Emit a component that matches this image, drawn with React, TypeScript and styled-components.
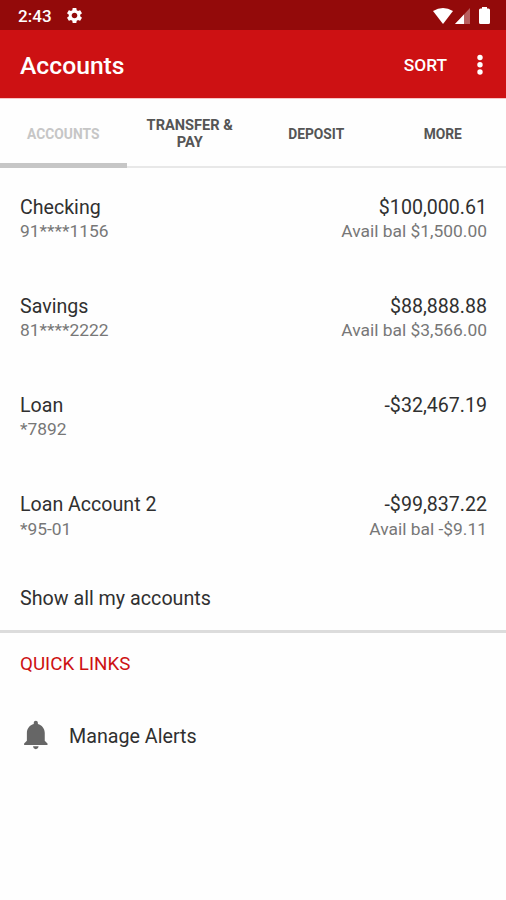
import React from 'react';
import styled, { createGlobalStyle } from 'styled-components';

const GlobalStyle = createGlobalStyle`
  *, *::before, *::after { box-sizing: border-box; }
  body { margin: 0; background: #fff; font-family: Roboto, "Liberation Sans", sans-serif; }
  button { border: 0; padding: 0; background: none; font: inherit; }
`;

const Screen = styled.main`
  display: flex;
  flex-direction: column;
  width: 506px;
  height: 900px;
  overflow: hidden;
  background: #fefefe;
  color: #303030;
`;

const StatusBar = styled.div`
  display: flex;
  align-items: center;
  justify-content: space-between;
  height: 30px;
  padding: 1px 16px 0 18px;
  background: #930a0a;
  color: #fff;
`;

const StatusGroup = styled.div`
  display: flex;
  align-items: center;
`;

const Clock = styled.time`
  width: 47px;
  font-size: 17px;
  font-weight: 500;
  letter-spacing: 0.1px;
`;

const Glyph = styled.svg<{ $gap?: number }>`
  display: block;
  flex: none;
  margin-left: ${({ $gap = 0 }) => $gap}px;
  fill: currentColor;
`;

const AppBar = styled.header`
  display: flex;
  align-items: center;
  height: 68px;
  padding: 3px 23px 0 20px;
  background: #cd1113;
  color: #fff;
`;

const Title = styled.h1`
  flex: 1;
  margin: 0;
  font-size: 24.7px;
  line-height: 30px;
  font-weight: 500;
`;

const SortButton = styled.button`
  padding-bottom: 1px;
  color: #fff;
  font-size: 17.3px;
  font-weight: 500;
`;

const MenuButton = styled.button`
  margin: 0 0 1px 30px;
  color: #fff;
`;

const TabBar = styled.nav`
  display: grid;
  grid-template-columns: repeat(4, 1fr);
  height: 70px;
  border-top: 1px solid #f9c4c4;
  border-bottom: 2px solid #e8e8e8;
  flex: none;
`;

const Tab = styled.button<{ $active?: boolean }>`
  padding: 6px 12px 0;
  height: 69px;
  border-bottom: 5px solid ${({ $active }) => ($active ? '#c6c6c6' : 'transparent')};
  color: ${({ $active }) => ($active ? '#c6c6c6' : '#555')};
  font-size: 13.8px;
  line-height: 17px;
  font-weight: 700;
  text-align: center;
`;

const WideLabel = styled.span`
  font-size: 14.6px;
`;

const AccountList = styled.ul`
  margin: 0;
  padding: 0;
  list-style: none;
`;

const AccountRow = styled.li`
  display: flex;
  justify-content: space-between;
  height: 99.2px;
  padding: 26.6px 19px 0 20px;
`;

const Column = styled.div<{ $end?: boolean }>`
  text-align: ${({ $end }) => ($end ? 'right' : 'left')};
`;

const Primary = styled.div`
  font-size: 19.6px;
  line-height: 26px;
`;

const Secondary = styled.div`
  margin-top: -0.6px;
  color: #777;
  font-size: 17.4px;
  line-height: 23px;
`;

const ShowAll = styled.button`
  height: 68px;
  padding: 2px 20px 0;
  border-bottom: 3px solid #dcdcdc;
  color: #303030;
  font-size: 19.7px;
  text-align: left;
`;

const SectionTitle = styled.h2`
  margin: 17px 20px 0;
  color: #cd1113;
  font-size: 18.8px;
  line-height: 28px;
  font-weight: 400;
`;

const LinkRow = styled.div`
  display: flex;
  align-items: center;
  height: 60px;
  margin-top: 29px;
  padding: 0 20px;
  font-size: 19.7px;
`;

const BellIcon = styled(Glyph)`
  margin: -4px 16.5px 0 -0.5px;
  color: #666;
`;

const tabs = ['ACCOUNTS', 'TRANSFER & PAY', 'DEPOSIT', 'MORE'];

const accounts = [
  { name: 'Checking', number: '91****1156', balance: '$100,000.61', available: 'Avail bal $1,500.00' },
  { name: 'Savings', number: '81****2222', balance: '$88,888.88', available: 'Avail bal $3,566.00' },
  { name: 'Loan', number: '*7892', balance: '-$32,467.19' },
  { name: 'Loan Account 2', number: '*95-01', balance: '-$99,837.22', available: 'Avail bal -$9.11' },
];

export default function App() {
  return (
    <>
      <GlobalStyle />
      <Screen>
        <StatusBar>
          <StatusGroup>
            <Clock>2:43</Clock>
            <Glyph width="19" height="19" viewBox="0 0 24 24">
              <path d="M19.14 12.94c.04-.3.06-.61.06-.94 0-.32-.02-.64-.07-.94l2.03-1.58a.49.49 0 0 0 .12-.61l-1.92-3.32a.488.488 0 0 0-.59-.22l-2.39.96c-.5-.38-1.03-.7-1.62-.94l-.36-2.54a.484.484 0 0 0-.48-.41h-3.84c-.24 0-.43.17-.47.41l-.36 2.54c-.59.24-1.13.57-1.62.94l-2.39-.96c-.22-.08-.47 0-.59.22L2.74 8.87c-.12.21-.08.47.12.61l2.03 1.58c-.05.3-.09.63-.09.94s.02.64.07.94l-2.03 1.58a.49.49 0 0 0-.12.61l1.92 3.32c.12.22.37.29.59.22l2.39-.96c.5.38 1.03.7 1.62.94l.36 2.54c.05.24.24.41.48.41h3.84c.24 0 .44-.17.47-.41l.36-2.54c.59-.24 1.13-.56 1.62-.94l2.39.96c.22.08.47 0 .59-.22l1.92-3.32c.12-.22.07-.47-.12-.61l-2.01-1.58zM12 15.6c-1.98 0-3.6-1.62-3.6-3.6s1.62-3.6 3.6-3.6 3.6 1.62 3.6 3.6-1.62 3.6-3.6 3.6z" />
            </Glyph>
          </StatusGroup>
          <StatusGroup>
            <Glyph width="20" height="16" viewBox="0 0 20 16">
              <path d="M0 3Q10-3 20 3L10 16Z" />
            </Glyph>
            <Glyph $gap={2} width="15" height="16" viewBox="0 0 15 16">
              <path d="M15 0V16H0Z" opacity="0.35" />
              <path d="M9 6.4V16H0Z" />
            </Glyph>
            <Glyph $gap={9} width="11" height="17" viewBox="0 0 11 17">
              <path d="M3 0H8V1.5H9.5Q11 1.5 11 3V15.5Q11 17 9.5 17H1.5Q0 17 0 15.5V3Q0 1.5 1.5 1.5H3Z" />
            </Glyph>
          </StatusGroup>
        </StatusBar>
        <AppBar>
          <Title>Accounts</Title>
          <SortButton>SORT</SortButton>
          <MenuButton aria-label="More options">
            <Glyph width="6" height="22" viewBox="0 0 6 22">
              <circle cx="3" cy="3.5" r="2.7" />
              <circle cx="3" cy="10.8" r="2.7" />
              <circle cx="3" cy="18" r="2.7" />
            </Glyph>
          </MenuButton>
        </AppBar>
        <TabBar>
          {tabs.map((label, i) => (
            <Tab key={label} $active={i === 0}>
              {i === 1 ? <WideLabel>{label}</WideLabel> : label}
            </Tab>
          ))}
        </TabBar>
        <AccountList>
          {accounts.map((a) => (
            <AccountRow key={a.name}>
              <Column>
                <Primary>{a.name}</Primary>
                <Secondary>{a.number}</Secondary>
              </Column>
              <Column $end>
                <Primary>{a.balance}</Primary>
                {a.available && <Secondary>{a.available}</Secondary>}
              </Column>
            </AccountRow>
          ))}
        </AccountList>
        <ShowAll>Show all my accounts</ShowAll>
        <SectionTitle>QUICK LINKS</SectionTitle>
        <LinkRow>
          <BellIcon width="33" height="34" viewBox="0 0 24 24" preserveAspectRatio="none">
            <path d="M11.5 22c1.1 0 2-.9 2-2h-4c0 1.1.9 2 2 2zm6.5-6v-5.5c0-3.07-2.13-5.64-5-6.32V3.5c0-.83-.67-1.5-1.5-1.5S10 2.67 10 3.5v.68c-2.87.68-5 3.25-5 6.32V16l-2 2v1h17v-1l-2-2z" />
          </BellIcon>
          Manage Alerts
        </LinkRow>
      </Screen>
    </>
  );
}
